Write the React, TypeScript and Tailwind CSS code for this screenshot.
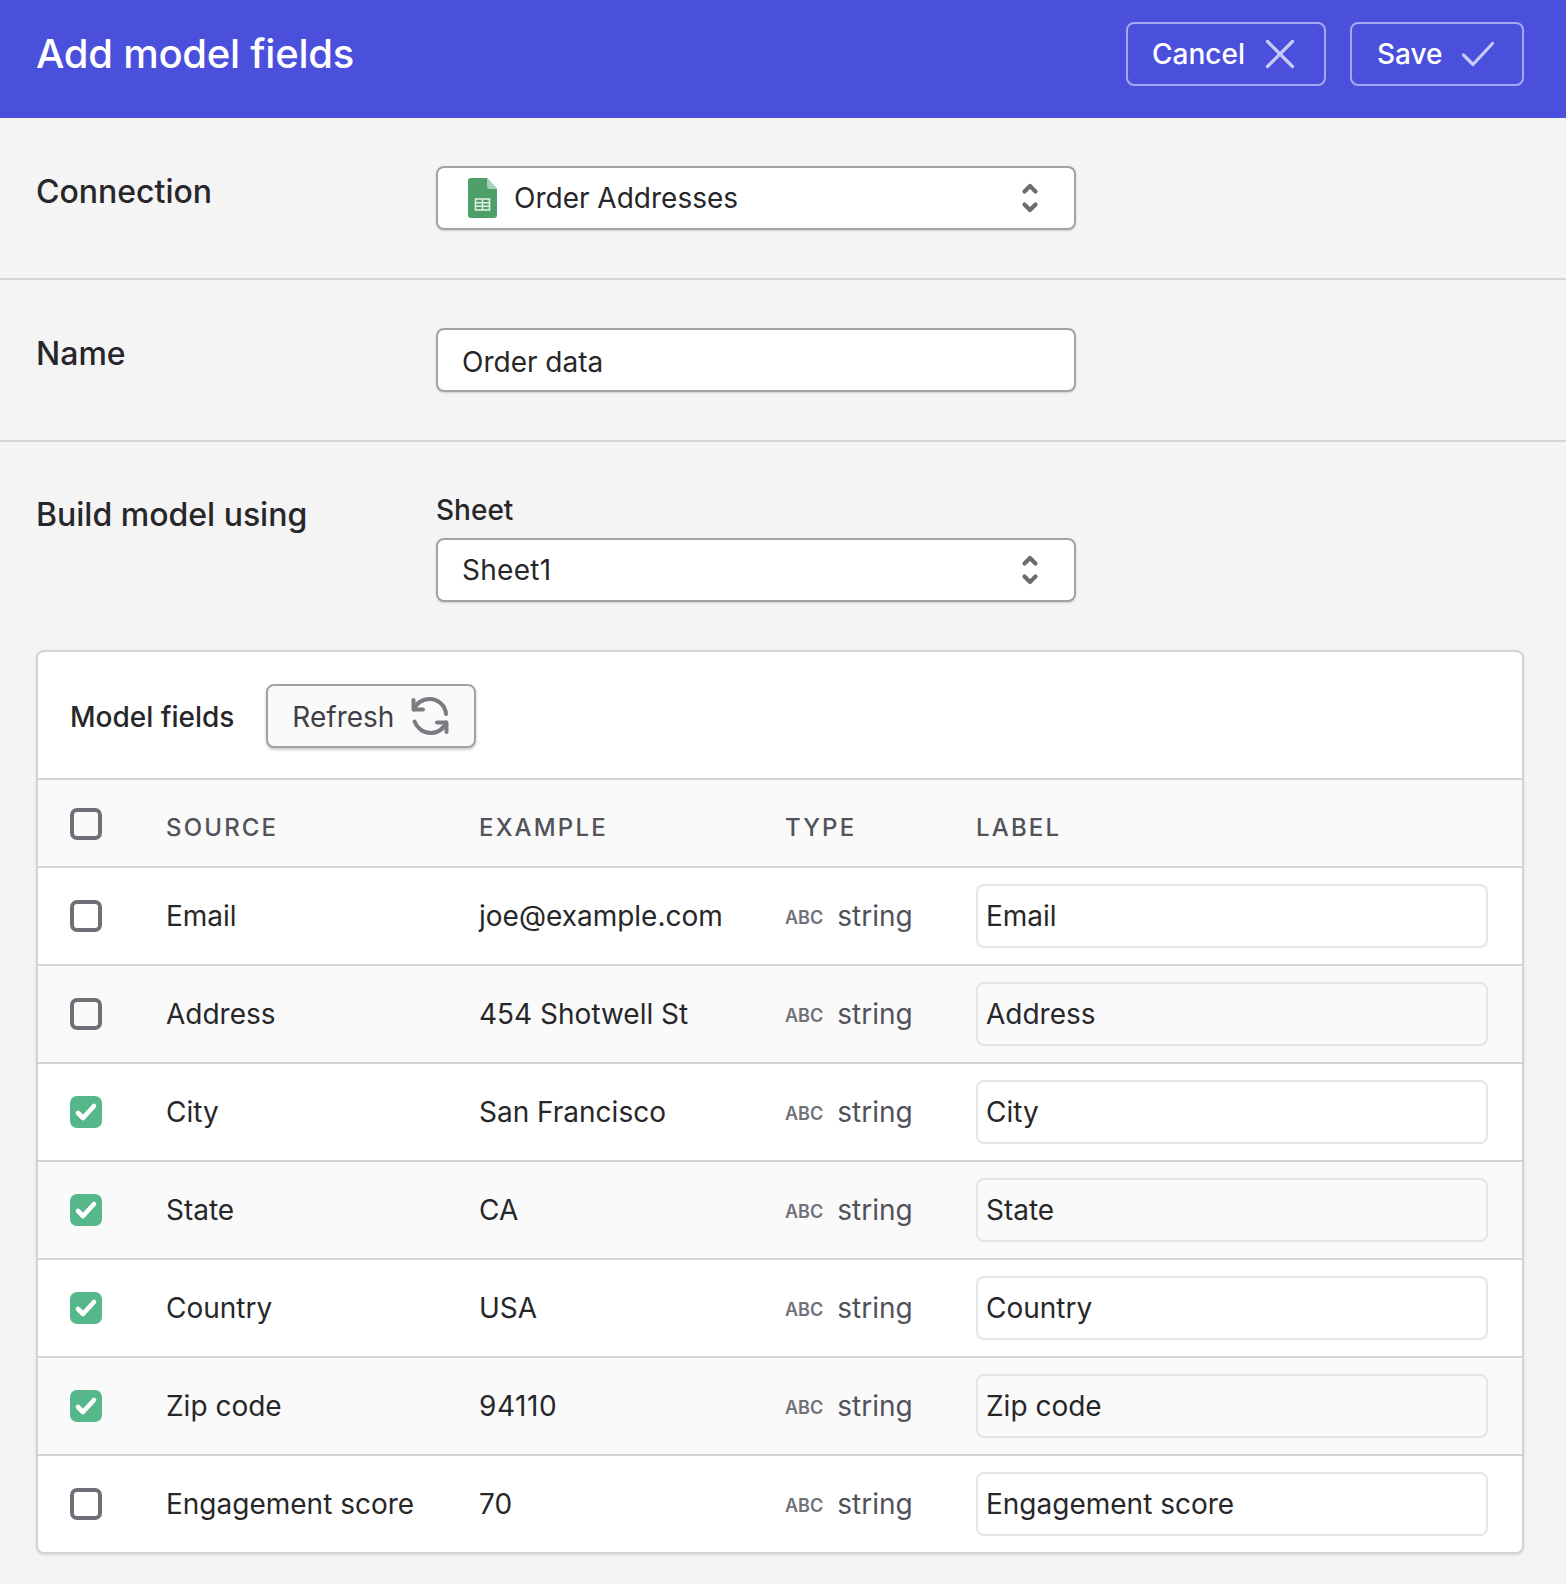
const rows = [
  { source: "Email", example: "joe@example.com", checked: false },
  { source: "Address", example: "454 Shotwell St", checked: false },
  { source: "City", example: "San Francisco", checked: true },
  { source: "State", example: "CA", checked: true },
  { source: "Country", example: "USA", checked: true },
  { source: "Zip code", example: "94110", checked: true, wide: true },
  { source: "Engagement score", example: "70", checked: false },
];

const gridCols = "grid grid-cols-[128px_313px_306px_191px_1fr] items-center";

function Chevrons() {
  return (
    <svg width="20" height="32" viewBox="0 0 20 32" fill="none" stroke="#6b6b70" strokeWidth="4.2" strokeLinecap="round" strokeLinejoin="round">
      <path d="M4.5 9.5 10 4l5.5 5.5" />
      <path d="M4.5 22.5 10 28l5.5-5.5" />
    </svg>
  );
}

function SheetsIcon() {
  return (
    <svg width="29" height="40" viewBox="0 0 29 40">
      <path d="M3 0h16l10 11v26a3 3 0 0 1-3 3H3a3 3 0 0 1-3-3V3a3 3 0 0 1 3-3z" fill="#4f9f6b" />
      <path d="M19 0l10 11h-7a3 3 0 0 1-3-3z" fill="#a5d3b5" />
      <path d="M7.5 21h14v11h-14z" fill="none" stroke="#e4f2e8" strokeWidth="1.6" />
      <path d="M7.5 24.7h14M7.5 28.3h14M14.5 21v11" stroke="#e4f2e8" strokeWidth="1.4" />
    </svg>
  );
}

function RefreshIcon() {
  return (
    <svg width="40" height="40" viewBox="0 0 40 40" fill="none" stroke="#7b7b82" strokeWidth="4" strokeLinecap="round" strokeLinejoin="round">
      <path d="M3.5 4v9.5H13" />
      <path d="M4 13.5C6 7.5 12 3 19.5 3 28.5 3 35.5 10 36 18" />
      <path d="M36.5 36v-9.5H27" />
      <path d="M36 26.5C34 32.5 28 37 20.5 37 13 37 7 32 4.5 25.5" />
    </svg>
  );
}

function Checkbox({ checked }: { checked: boolean }) {
  if (checked) {
    return (
      <div className="h-8 w-8 rounded-[7px] bg-[#55b78a]">
        <svg width="32" height="32" viewBox="0 0 32 32" fill="none" stroke="#fff" strokeWidth="4.6" strokeLinecap="round" strokeLinejoin="round">
          <path d="M8 17l5 5L24 10" />
        </svg>
      </div>
    );
  }
  return <div className="h-8 w-8 rounded-[7px] border-4 border-[#6f6f78] bg-transparent" />;
}

function Select({ children }: { children: React.ReactNode }) {
  return (
    <div className="flex h-16 w-[640px] items-center justify-between rounded-lg border-2 border-[#a1a1aa] bg-white pr-[34px] pl-6 shadow-[0_1px_2px_rgba(0,0,0,0.15)]">
      {children}
      <Chevrons />
    </div>
  );
}

export default function App() {
  return (
    <div className="min-h-[1584px] bg-[#f4f4f5] font-['Inter',sans-serif] text-[28px] text-[#27272a]">
      <header className="flex h-[118px] items-start justify-between bg-[#4b50dc] pt-[22px] pr-[42px] pl-9">
        <h1 className="text-[40px] leading-16 font-medium tracking-[-0.25px] text-white">Add model fields</h1>
        <div className="flex gap-6">
          <button className="flex h-16 w-[200px] items-center gap-5 rounded-lg border-2 border-[#a5a8ee] pl-6 font-medium text-white">
            Cancel
            <svg width="30" height="30" viewBox="0 0 30 30" fill="none" stroke="#c9cbf6" strokeWidth="3.2" strokeLinecap="round">
              <path d="M2.5 2.5l25 25M27.5 2.5l-25 25" />
            </svg>
          </button>
          <button className="flex h-16 w-[174px] items-center gap-[18px] rounded-lg border-2 border-[#a5a8ee] pl-[25px] font-medium text-white">
            Save
            <svg width="34" height="26" viewBox="0 0 34 26" fill="none" stroke="#c9cbf6" strokeWidth="3.2" strokeLinecap="round" strokeLinejoin="round">
              <path d="M2.5 14l9.5 9.5L31.5 2.5" />
            </svg>
          </button>
        </div>
      </header>

      <section className="flex h-[162px] border-b-2 border-[#d4d4d8] pt-[48px] pl-9">
        <div className="w-[400px] text-[32px] leading-[52px] font-medium">Connection</div>
        <Select>
          <div className="ml-[6px] flex items-center gap-[17px]">
            <SheetsIcon />
            <span>Order Addresses</span>
          </div>
        </Select>
      </section>

      <section className="flex h-[162px] border-b-2 border-[#d4d4d8] pt-[48px] pl-9">
        <div className="w-[400px] text-[32px] leading-[52px] font-medium">Name</div>
        <div className="flex h-16 w-[640px] items-center rounded-lg border-2 border-[#a1a1aa] bg-white pt-1 pl-6 shadow-[0_1px_2px_rgba(0,0,0,0.15)]">Order data</div>
      </section>

      <section className="pt-[48px] pr-[42px] pl-9">
        <div className="flex">
          <div className="w-[400px] text-[32px] leading-[50px] font-medium">Build model using</div>
          <div>
            <div className="mb-2 leading-10 font-medium">Sheet</div>
            <Select>
              <span className="tracking-[0.3px]">Sheet1</span>
            </Select>
          </div>
        </div>

        <div className="mt-12 overflow-hidden rounded-lg border-2 border-[#d4d4d8] bg-white shadow-sm">
          <div className="flex h-[126px] items-center gap-8 pt-[2px] pl-[32px]">
            <span className="pt-[2px] font-medium">Model fields</span>
            <button className="flex h-16 w-[210px] items-center justify-center gap-4 rounded-lg border-2 border-[#a1a1aa] bg-[#fafafa] text-[#3f3f46] shadow-[0_2px_3px_rgba(0,0,0,0.2)]">
              <span className="pt-[2px]">Refresh</span>
              <RefreshIcon />
            </button>
          </div>
          <div className={`${gridCols} h-[88px] border-t-2 border-[#d4d4d8] bg-[#fafafa] text-[24px] font-medium tracking-[0.09em] text-[#52525b]`}>
            <div className="pt-[2px] pl-[32px]"><Checkbox checked={false} /></div>
            <div className="pt-[10px]">SOURCE</div>
            <div className="pt-[10px]">EXAMPLE</div>
            <div className="pt-[10px]">TYPE</div>
            <div className="pt-[10px]">LABEL</div>
          </div>
          {rows.map((row, i) => (
            <div
              key={row.source}
              className={`${gridCols} h-[98px] border-t-2 border-[#d4d4d8] ${i % 2 === 1 ? "bg-[#fafafa]" : "bg-white"}`}
            >
              <div className="pl-[32px]"><Checkbox checked={row.checked} /></div>
              <div>{row.source}</div>
              <div className={row.wide ? "tracking-[0.6px]" : ""}>{row.example}</div>
              <div className="flex items-center gap-[14px] text-[#52525b]">
                <span className="pt-[2px] text-[18px] font-semibold text-[#71717a]">ABC</span>
                <span>string</span>
              </div>
              <div className="pr-[34px]">
                <div className={`flex h-16 items-center rounded-lg border-2 border-[#e4e4e7] pl-2 ${i % 2 === 1 ? "bg-[#fafafa]" : "bg-white"}`}>{row.source}</div>
              </div>
            </div>
          ))}
        </div>
      </section>
    </div>
  );
}
